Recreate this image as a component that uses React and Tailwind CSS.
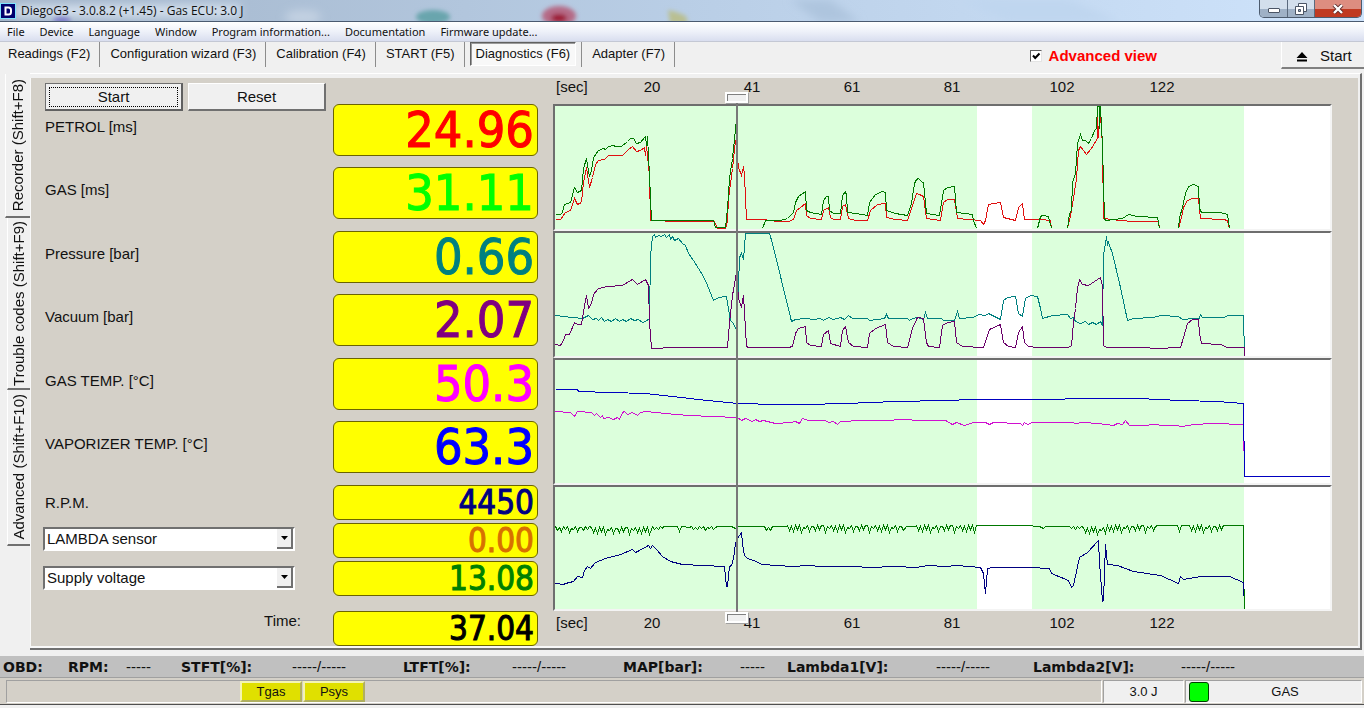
import { useState } from 'react';

const MENU = ['File', 'Device', 'Language', 'Window', 'Program information...', 'Documentation', 'Firmware update...'];

const TOOLS = [
  'Readings (F2)',
  'Configuration wizard (F3)',
  'Calibration (F4)',
  'START (F5)',
  'Diagnostics (F6)',
  'Adapter (F7)',
];

const SIDE_TABS = [
  { label: 'Recorder (Shift+F8)', size: 'h-36 w-[25px]' },
  { label: 'Trouble codes (Shift+F9)', size: 'h-[172px] w-[23px]' },
  { label: 'Advanced (Shift+F10)', size: 'h-[156px] w-[23px]' },
];

const READINGS = [
  { id: 'petrol', label: 'PETROL [ms]', value: '24.96', color: 'text-[#ff0000]' },
  { id: 'gas', label: 'GAS [ms]', value: '31.11', color: 'text-[#00ff00]' },
  { id: 'pressure', label: 'Pressure [bar]', value: '0.66', color: 'text-[#008080]' },
  { id: 'vacuum', label: 'Vacuum [bar]', value: '2.07', color: 'text-[#800080]' },
  { id: 'gas-temp', label: 'GAS TEMP. [°C]', value: '50.3', color: 'text-[#ff00ff]' },
  { id: 'vaporizer-temp', label: 'VAPORIZER TEMP. [°C]', value: '63.3', color: 'text-[#0000ff]' },
];

const TICKS = [
  { label: '20', width: 'w-[100px]' },
  { label: '41', width: 'w-[100px]' },
  { label: '61', width: 'w-[100px]' },
  { label: '81', width: 'w-[100px]' },
  { label: '102', width: 'w-[120px]' },
  { label: '122', width: 'w-[80px]' },
];

// repeating teeth that hang down from a base level
const TEETH = [0, 5, 1, 6, 0, 4, 0, 7, 2, 3, 0, 6, 1, 1, 5, 0, 4, 0, 0, 7, 1, 3];

function ripple(from, to, base, depth, step = 2) {
  const points = [];
  for (let x = from, i = 0; x < to; x += step, i += 1) {
    points.push(`${x},${base + Math.round((TEETH[i % TEETH.length] * depth) / 7)}`);
  }
  return points.join(' ');
}

const VOLTAGE = [
  ripple(0, 36, 39, 6),
  ripple(36, 97, 40, 7),
  ripple(97, 108, 39, 4),
  '108,39 122,39 124,44 126,39 134,40',
  ripple(136, 162, 39, 4),
  '162,39 176,39 180,41 183,39 208,39',
  ripple(209, 216, 39, 5),
  '217,39 231,39',
  ripple(232, 350, 38, 7),
  '351,39 360,39',
  ripple(361, 420, 38, 7),
  '421,38 470,38 484,39 488,41 490,39 512,39',
  ripple(514, 528, 39, 3),
  ripple(528, 552, 40, 7),
  ripple(552, 602, 38, 7),
  '602,38 622,38 624,44 626,38 633,38',
  ripple(634, 672, 38, 7),
  '673,38 688,38 688,80 689,122',
].join(' ');

const CHARTS = [
  {
    name: 'Injection times',
    height: 'h-[127px]',
    range: 123,
    lines: [
      {
        color: '#e01010',
        points:
          '0,113 5,113 10,106 15,104 19,92 22,98 26,96 28,76 31,61 34,81 37,71 40,58 43,54 49,53 53,49 67,49 73,43 77,40 81,45 85,44 89,41 90,49 91,40 92,49 94,69 95,114 123,115 159,115 162,122 170,122 172,114 173,92 177,62 180,34 183,61 186,69 188,60 189,69 191,113 207,113 223,115 233,115 238,113 241,104 245,101 250,97 251,109 255,112 266,113 268,104 273,101 275,111 278,113 285,113 287,100 290,98 293,112 300,114 312,114 315,104 322,98 330,97 331,111 340,113 352,114 358,96 361,87 364,88 368,90 371,112 385,114 388,96 392,93 399,93 402,112 425,114 428,118 430,114 433,98 445,96 448,111 460,114 463,101 467,97 469,113 485,113 495,114 496,122',
      },
      {
        color: '#e01010',
        points:
          '512,122 515,109 518,92 521,72 523,44 525,40 531,48 536,42 542,32 542,11 543,31 544,9 545,9 547,39 548,112 565,114 578,115 603,115 604,122',
      },
      { color: '#e01010', points: '623,122 626,111 628,101 632,94 637,92 643,92 645,112 668,113 672,114 674,122' },
      {
        color: '#007800',
        points:
          '0,108 5,108 7,106 9,98 15,96 19,81 22,86 26,84 28,62 31,52 34,70 36,64 38,51 43,44 48,42 50,43 53,40 58,39 60,40 66,40 72,35 75,32 78,32 81,37 85,36 90,30 91,39 92,30 94,69 96,114 158,114 160,121 170,121 172,102 174,72 177,52 181,13',
      },
      {
        color: '#007800',
        points:
          '207,122 210,114 225,114 232,112 238,106 240,96 243,90 250,85 251,104 255,106 266,108 268,94 271,90 273,90 274,104 278,107 285,107 287,89 290,85 291,89 292,106 300,107 312,109 314,96 320,88 327,85 330,86 331,104 340,107 352,109 356,97 359,77 361,73 363,72 367,76 368,76 371,107 384,109 388,84 392,81 399,80 401,106 417,108 418,114 421,122',
      },
      { color: '#007800', points: '482,122 485,110 487,109 493,110 495,119 497,122' },
      {
        color: '#007800',
        points:
          '512,122 514,107 516,104 517,76 520,67 522,37 525,28 527,34 530,34 533,37 536,32 539,24 541,22 542,0 544,0 544,22 545,0 547,39 549,113 551,114 567,112 573,108 582,110 602,111 604,122',
      },
      {
        color: '#007800',
        points: '623,122 624,111 627,101 630,87 633,80 638,78 643,80 644,102 646,106 665,106 672,108 674,122',
      },
    ],
  },
  {
    name: 'Pressure and vacuum',
    height: 'h-[127px]',
    range: 123,
    lines: [
      {
        color: '#007f7f',
        points:
          '0,82 8,83 27,85 33,82 37,86 41,85 43,87 46,84 49,88 52,86 56,88 60,85 64,88 67,86 71,88 75,85 79,87 83,86 87,89 90,88 94,85 95,22 97,3 99,1 100,4 103,2 106,3 109,1 111,4 114,1 115,6 117,3 119,7 123,5 127,10 130,12 133,20 138,27 143,35 148,43 152,52 158,67 163,64 171,63 173,75 175,87 178,90 181,97 183,52 184,24 186,20 188,26 190,0 214,0 217,10 236,88 240,86 250,85 258,86 265,85 268,87 273,84 278,86 285,84 289,86 293,82 297,85 312,85 314,87 322,86 329,85 331,81 333,85 352,85 354,87 357,85 362,84 368,86 370,79 372,85 386,85 388,87 399,87 402,78 404,85 418,84 423,81 430,82 433,80 445,86 448,67 452,64 460,63 463,80 467,83 470,65 475,62 482,63 485,75 487,85 497,82 512,81 515,85 518,84 520,88 525,90 530,88 533,91 537,89 541,91 545,88 547,92 548,22 551,3 552,12 553,9 557,20 565,54 572,87 578,85 598,84 605,82 623,83 627,86 638,85 644,85 645,81 647,84 668,84 673,82 688,82 689,122',
      },
      {
        color: '#6a006a',
        points:
          '0,111 5,112 8,107 10,101 14,101 19,89 22,91 26,91 29,72 31,62 33,75 36,70 38,61 43,55 52,53 67,52 77,46 82,51 90,46 93,52 94,89 96,115 120,114 172,114 174,89 177,62 181,39 183,65 186,74 188,62 191,113 193,114 233,114 237,113 240,100 243,95 250,93 251,109 255,112 266,113 268,101 273,97 275,110 285,113 287,97 290,93 293,109 298,113 312,114 314,100 320,95 330,91 332,109 338,113 352,114 357,95 362,84 368,85 371,109 373,113 384,114 387,92 392,89 399,88 401,109 407,113 428,114 431,105 434,96 445,91 448,109 453,113 460,114 463,99 467,93 469,109 473,113 482,114 513,114 516,112 518,89 520,75 522,55 524,46 527,51 533,52 545,44 547,52 548,112 551,114 588,114 600,115 625,114 628,104 632,90 637,86 643,86 644,100 646,110 665,111 672,114 689,114 689,122',
      },
    ],
  },
  {
    name: 'Temperatures',
    height: 'h-[127px]',
    range: 123,
    lines: [
      {
        color: '#d010d0',
        points:
          '0,51 15,52 19,56 22,51 36,52 39,55 41,53 45,57 47,55 48,58 53,57 58,59 62,57 64,59 67,52 69,51 72,54 77,52 82,55 85,52 90,51 110,53 133,55 157,56 182,57 186,60 190,58 197,61 200,59 204,61 208,60 220,63 235,62 240,61 244,63 247,58 253,60 270,60 273,62 278,61 282,64 285,61 307,60 327,60 350,59 363,60 390,60 397,64 401,62 409,65 418,62 430,62 434,64 438,62 465,63 467,65 469,62 472,64 477,62 517,62 520,63 528,62 542,63 550,64 558,65 562,63 567,64 570,60 574,65 590,65 598,64 608,65 620,65 627,66 638,64 658,63 688,64 688,90',
      },
      {
        color: '#0000c0',
        points:
          '0,29 22,29 23,31 55,32 90,33 117,36 143,39 182,43 223,44 250,44 290,43 340,41 390,40 418,39 485,39 535,38 583,38 625,40 662,41 688,43 689,116 776,116',
      },
    ],
  },
  {
    name: 'Voltage and R.P.M.',
    height: 'h-[126px]',
    range: 122,
    lines: [
      { color: '#007800', points: VOLTAGE },
      {
        color: '#000080',
        points:
          '0,96 8,97 10,96 18,94 22,89 27,90 29,83 32,79 35,81 40,75 50,71 65,67 77,62 80,65 84,63 93,58 95,61 97,58 101,62 107,69 115,74 127,77 147,78 169,79 171,99 172,99 174,79 176,78 178,71 180,56 182,51 186,45 187,56 189,68 192,71 198,73 207,77 237,79 252,78 267,79 300,79 313,80 340,79 360,80 373,78 390,79 402,78 425,80 428,86 430,106 432,81 438,80 475,80 494,81 496,86 513,93 516,100 518,98 524,70 532,65 543,53 544,75 547,114 548,113 550,57 552,77 562,78 578,84 605,88 623,96 625,89 628,92 645,89 674,89 688,95 688,108',
      },
    ],
  },
];

function AppIcon() {
  return (
    <svg viewBox="0 0 16 16" className="size-4" aria-hidden="true">
      <rect width="16" height="16" fill="#7fe4ff" />
      <rect x="1" y="1" width="14" height="14" fill="#00006e" />
      <path d="M5.5 4.5h3a2.5 2.5 0 0 1 2.5 2.5v2a2.5 2.5 0 0 1-2.5 2.5h-3z" fill="none" stroke="#fff" strokeWidth="2" />
    </svg>
  );
}

function TitleBar() {
  return (
    <header className="relative flex h-[22px] items-center overflow-hidden border-b border-[#4a5a70] bg-linear-to-r from-[#a3b5ca] via-[#b9cee6] to-[#cfe4fc]">
      <svg className="absolute inset-0 h-full w-full" viewBox="0 0 1364 21" preserveAspectRatio="none" aria-hidden="true">
        <defs>
          <filter id="haze" x="-50%" y="-100%" width="200%" height="300%">
            <feGaussianBlur stdDeviation="4" />
          </filter>
          <filter id="haze-small" x="-50%" y="-50%" width="200%" height="200%">
            <feGaussianBlur stdDeviation="2" />
          </filter>
        </defs>
        <g filter="url(#haze)">
          <rect x="15" y="5" width="225" height="12" fill="#d3dfec" />
          <ellipse cx="303" cy="17" rx="18" ry="7" fill="#c3d1e2" />
          <path d="M960 0h110l50 22H1010z" fill="#bfd6ef" />
          <path d="M790 0h40l30 22H820z" fill="#aec5de" />
        </g>
        <g filter="url(#haze-small)">
          <ellipse cx="433" cy="17" rx="17" ry="7" fill="#69a5ad" />
          <ellipse cx="559" cy="16" rx="17" ry="10" fill="#b56a86" />
          <ellipse cx="559" cy="18" rx="8" ry="4" fill="#9c1233" />
          <path d="M668 10l8 2 10 4 2 8h-18z" fill="#b9bf92" />
          <ellipse cx="62" cy="20" rx="9" ry="3" fill="#7b79c9" />
        </g>
      </svg>
      <div className="relative flex flex-1 items-center gap-[5px]">
        <AppIcon />
        <h1 className="font-['Open_Sans',sans-serif] text-xs text-[#111]">DiegoG3 - 3.0.8.2 (+1.45) - Gas ECU: 3.0 J</h1>
      </div>
      <div className="relative mr-0.5 flex h-[18px] self-start overflow-hidden rounded-b-[5px] border border-t-0 border-[#4c5b6e]">
        <button
          aria-label="Minimize"
          className="flex w-7 items-center justify-center border-r border-[#5b6a7d] bg-linear-to-b from-[#d3dfec] from-50% to-[#9fb1c6] to-55%"
        >
          <span className="mt-1 h-[5px] w-3 rounded-[1px] border border-[#4b5565] bg-white" />
        </button>
        <button
          aria-label="Restore"
          className="flex w-[27px] items-center justify-center border-r border-[#5b6a7d] bg-linear-to-b from-[#d3dfec] from-50% to-[#9fb1c6] to-55%"
        >
          <svg viewBox="0 0 12 12" className="size-3" fill="#fff" stroke="#4b5565" aria-hidden="true">
            <path d="M3.5.5h8v8h-8z" />
            <path d="M.5 3.5h8v8h-8z" />
            <path d="M3.5 6.5h2v2h-2z" fill="#9fb1c6" />
          </svg>
        </button>
        <button
          aria-label="Close"
          className="flex w-[46px] items-center justify-center bg-linear-to-b from-[#dd8d80] from-50% to-[#c03a22] to-55%"
        >
          <svg viewBox="0 0 12 10" className="h-2.5 w-3" aria-hidden="true">
            <path d="M2 1l8 8M10 1L2 9" stroke="#5b2a2a" strokeWidth="4" />
            <path d="M2 1l8 8M10 1L2 9" stroke="#fff" strokeWidth="2.4" />
          </svg>
        </button>
      </div>
    </header>
  );
}

function Toolbar({ active, onSelect }) {
  return (
    <div className="flex h-8 items-start border-t border-[#c4c8d4] text-[13px]">
      <nav className="-ml-0.5 flex">
        {TOOLS.map((tool) => (
          <div key={tool} className="flex h-[25px] items-start border-r border-[#8c8c8c]">
            {tool === active ? (
              <button className="mx-[5px] h-6 border border-[#fff] border-t-[#606060] border-l-[#606060] bg-[#f8f8f8] px-[5px] shadow-[inset_1px_1px_0_#9a9a9a]">
                {tool}
              </button>
            ) : (
              <button className="h-6 pr-[9px] pl-[10px]" onClick={() => onSelect(tool)}>
                {tool}
              </button>
            )}
          </div>
        ))}
      </nav>
      <label className="mt-1 mr-[124px] ml-auto flex items-center gap-[7px] text-[15px] leading-5 font-bold text-[#ff0000]">
        <span className="relative flex">
          <input
            type="checkbox"
            defaultChecked
            className="peer size-3 appearance-none border border-[#e4e4e4] border-t-[#606060] border-l-[#606060] bg-white"
          />
          <svg
            viewBox="0 0 12 12"
            className="pointer-events-none absolute inset-0 hidden size-3 peer-checked:block"
            aria-hidden="true"
          >
            <path d="M3 5.5l2.2 2.5L9.5 3.5" fill="none" stroke="#000" strokeWidth="2" />
          </svg>
        </span>
        Advanced view
      </label>
      <button className="flex h-[27px] w-[83px] items-center gap-3 border-b-2 border-l border-[#808080] border-l-white bg-[#f0f0f0] pt-1 pl-[14px] text-[15px]">
        <svg viewBox="0 0 12 10" className="h-2.5 w-3" aria-hidden="true">
          <path d="M6 0l5.500 6H.5zM1 7.500h10v2H1z" />
        </svg>
        Start
      </button>
    </div>
  );
}

function Readout({ id, value, color, small = false }) {
  return (
    <output
      id={id}
      className={`flex items-center justify-end rounded-[6px] border border-[#6b6400] bg-[#ffff00] pr-[3px] font-['DejaVu_Sans_Condensed','DejaVu_Sans',sans-serif] [-webkit-text-stroke:1px] ${
        small ? 'h-[35px] text-[33px] leading-8' : 'h-[52px] text-[50px] leading-[50px]'
      } ${color}`}
    >
      {value}
    </output>
  );
}

function SignalSelect({ label, options }) {
  return (
    <div className="relative w-[252px]">
      <select
        aria-label={label}
        className="block h-6 w-full appearance-none border-2 border-white border-t-[#707070] border-l-[#707070] bg-white pl-0.5 text-[15px] leading-5"
      >
        {options.map((option) => (
          <option key={option}>{option}</option>
        ))}
      </select>
      <span className="pointer-events-none absolute top-0.5 right-0.5 flex h-5 w-4 items-center justify-center border-r-2 border-b-2 border-[#707070] bg-[#f0f0f0]">
        <svg viewBox="0 0 7 4" className="h-1 w-[7px]" aria-hidden="true">
          <path d="M0 0h7L3.500 4z" />
        </svg>
      </span>
    </div>
  );
}

function TimeAxis() {
  return (
    <div className="flex text-[15px] leading-[18px]">
      <span className="w-[49px] pl-[3px]">[sec]</span>
      {TICKS.map((tick) => (
        <span key={tick.label} className={`text-center ${tick.width}`}>
          {tick.label}
        </span>
      ))}
    </div>
  );
}

function Chart({ name, height, range, lines }) {
  return (
    <div className={`border-2 border-[#f4f4f4] border-t-[#6e6e6e] border-l-[#6e6e6e] bg-white ${height}`}>
      <svg
        viewBox={`0 0 775 ${range}`}
        preserveAspectRatio="none"
        className="block h-full w-full"
        shapeRendering="crispEdges"
        role="img"
        aria-label={name}
      >
        <rect x="0" y="0" width="422" height={range} fill="#dcffdc" />
        <rect x="477" y="0" width="212" height={range} fill="#dcffdc" />
        <g transform="translate(0.5 0.5)" fill="none" strokeWidth="1">
          {lines.map((line, i) => (
            <polyline key={i} points={line.points} stroke={line.color} vectorEffect="non-scaling-stroke" />
          ))}
        </g>
      </svg>
    </div>
  );
}

function CursorHandle() {
  return (
    <span className="block h-[11px] w-[23px] border-2 border-white bg-[#f0f0f0] shadow-[inset_1px_1px_0_#808080,1px_1px_0_#a0a0a0]" />
  );
}

function Recorder() {
  return (
    <div className="flex flex-1 bg-[#d4d0c8]">
      <div className="flex w-[302px] flex-col pt-[5px] pl-[14px] text-[15px] leading-5">
        <div className="flex gap-[5px]">
          <button className="h-7 w-[138px] border border-t-[#707070] border-l-[#707070] border-r-2 border-b-2 border-[#606060] bg-[#f0f0f0] p-[3px]">
            <span className="block border border-dotted border-black leading-[18px]">Start</span>
          </button>
          <button className="h-7 w-[138px] border border-t-white border-l-white border-r-2 border-b-2 border-[#707070] bg-[#f0f0f0]">
            Reset
          </button>
        </div>
        <div className="mt-1.5 -mb-[5px] flex flex-col">
          {READINGS.map((reading) => (
            <label key={reading.id} htmlFor={reading.id} className="odd:h-[63px] even:h-16">
              {reading.label}
            </label>
          ))}
        </div>
        <label htmlFor="rpm">R.P.M.</label>
        <div className="mt-[14px] -ml-0.5 flex flex-col gap-[15px]">
          <SignalSelect label="First extra signal" options={['LAMBDA sensor', 'Supply voltage']} />
          <SignalSelect label="Second extra signal" options={['Supply voltage', 'LAMBDA sensor']} />
        </div>
        <label htmlFor="time" className="mt-[21px] pr-8 text-right">
          Time:
        </label>
      </div>

      <div className="w-[205px] pt-[26px]">
        <div className="flex flex-col gap-3">
          {[0, 2, 4].map((start) => (
            <div key={start} className="flex flex-col gap-[11px]">
              {READINGS.slice(start, start + 2).map((reading) => (
                <Readout key={reading.id} id={reading.id} value={reading.value} color={reading.color} />
              ))}
            </div>
          ))}
        </div>
        <div className="mt-3 flex flex-col gap-[3px]">
          <Readout id="rpm" value="4450" color="text-[#000080]" small />
          <Readout id="lambda" value="0.00" color="text-[#d87000]" small />
          <Readout id="voltage" value="13.08" color="text-[#008000]" small />
        </div>
        <div className="mt-[15px]">
          <Readout id="time" value="37.04" color="text-black" small />
        </div>
      </div>

      <div className="mr-[26px] ml-[15px] min-w-0 flex-1">
        <div className="h-[26px]">
          <TimeAxis />
        </div>
        <div className="relative">
          {CHARTS.map((chart) => (
            <Chart key={chart.name} {...chart} />
          ))}
          <div className="absolute -top-3 -bottom-3 left-[172px] flex flex-col items-center">
            <CursorHandle />
            <span className="w-0.5 flex-1 bg-[#787878]" />
            <CursorHandle />
          </div>
        </div>
        <div className="pt-[3px]">
          <TimeAxis />
        </div>
      </div>
    </div>
  );
}

function ObdBar() {
  return (
    <div className="mt-1.5 grid h-[21px] grid-cols-[65px_58px_55px_111px_111px_109px_111px_117px_47px_149px_97px_148px_1fr] items-center bg-[#c0c0c0] pl-[3px] text-[15px] leading-5 whitespace-nowrap">
      <ObdLabel>OBD:</ObdLabel>
      <ObdLabel>RPM:</ObdLabel>
      <span>-----</span>
      <ObdLabel>STFT[%]:</ObdLabel>
      <span>-----/-----</span>
      <ObdLabel>LTFT[%]:</ObdLabel>
      <span>-----/-----</span>
      <ObdLabel>MAP[bar]:</ObdLabel>
      <span>-----</span>
      <ObdLabel>Lambda1[V]:</ObdLabel>
      <span>-----/-----</span>
      <ObdLabel>Lambda2[V]:</ObdLabel>
      <span>-----/-----</span>
    </div>
  );
}

function ObdLabel({ children }) {
  return <b className="font-['DejaVu_Sans',sans-serif] text-sm leading-5">{children}</b>;
}

function StatusBar() {
  return (
    <footer className="border-b border-[#505050] bg-[#d4d0c8] text-[13px]">
      <div className="flex h-[27px] items-stretch gap-px border-t border-[#a0a0a0] pt-0.5 pr-0.5 pb-px pl-1.5">
        <div className="flex flex-1 gap-px border border-white border-t-[#a0a0a0] border-l-[#a0a0a0] pl-[233px]">
          <button className="w-[62px] border-2 border-[#b0b060] border-t-[#f4f4b0] border-l-[#f4f4b0] bg-[#e0e000] leading-4">Tgas</button>
          <button className="w-[62px] border-2 border-[#b0b060] border-t-[#f4f4b0] border-l-[#f4f4b0] bg-[#e0e000] leading-4">Psys</button>
        </div>
        <div className="flex w-[81px] items-center justify-center border border-white border-t-[#a0a0a0] border-l-[#a0a0a0] bg-[#f0f0f0]">
          3.0 J
        </div>
        <div className="flex w-[177px] items-center border border-white border-t-[#a0a0a0] border-l-[#a0a0a0] bg-[#f0f0f0] pl-[3px]">
          <span className="size-5 rounded-[3px] border border-[#004000] bg-[#00ff00]" />
          <span className="flex-1 text-center">GAS</span>
        </div>
      </div>
    </footer>
  );
}

function App() {
  const [tool, setTool] = useState('Diagnostics (F6)');
  const [tab, setTab] = useState('Recorder (Shift+F8)');

  return (
    <div className="flex min-h-screen flex-col bg-[#f0f0f0] font-['Liberation_Sans',Arial,sans-serif] text-[#111]">
      <TitleBar />
      <nav className="flex h-[19px] items-center gap-[15px] bg-linear-to-b from-white via-[#eef1f9] to-[#d9deef] pl-[7px] font-['Noto_Sans',sans-serif] text-[11px] leading-4">
        {MENU.map((item) => (
          <button key={item} className="whitespace-nowrap">
            {item}
          </button>
        ))}
      </nav>
      <Toolbar active={tool} onSelect={setTool} />

      <main className="flex pr-0.5 pl-[5px]">
        <div className="flex flex-col items-end pt-px">
          {SIDE_TABS.map((item) => (
            <button
              key={item.label}
              onClick={() => setTab(item.label)}
              aria-pressed={tab === item.label}
              className={`flex items-center justify-center border-b-2 border-l border-[#707070] border-l-white text-[15px] leading-5 ${item.size}`}
            >
              <span className="rotate-180 whitespace-nowrap [writing-mode:vertical-rl]">{item.label}</span>
            </button>
          ))}
        </div>
        <div className="flex min-w-0 flex-1 border-t border-r-2 border-b-2 border-[#707070] border-t-white pt-1 pr-0.5">
          <div className="flex min-w-0 flex-1 border-b-2 border-l border-[#f8f8f8]">
            <Recorder />
          </div>
        </div>
      </main>

      <ObdBar />
      <StatusBar />
    </div>
  );
}

export default App;
